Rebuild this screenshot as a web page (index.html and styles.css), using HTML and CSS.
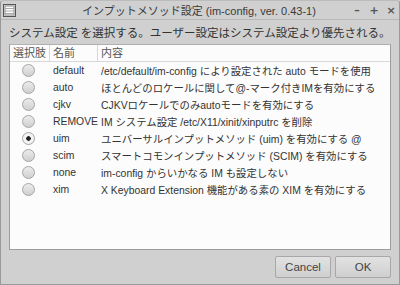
FILE: index.html
```html
<!DOCTYPE html>
<html lang="ja">
<head>
    <meta charset="UTF-8">
    <title>インプットメソッド設定</title>
    <link rel="stylesheet" href="styles.css">
</head>
<body>

<div class="window">

    <div class="titlebar">
        <svg class="app-icon" width="13" height="13" viewBox="0 0 13 13">
            <rect x="0.5" y="0.5" width="12" height="12" fill="#eee" stroke="#555"/>
            <rect x="2" y="2" width="9" height="9" fill="#fff" stroke="#888" stroke-width="1"/>
            <line x1="2" y1="4.5" x2="11" y2="4.5" stroke="#aaa"/>
            <line x1="2" y1="7" x2="11" y2="7" stroke="#aaa"/>
            <line x1="2" y1="9.5" x2="11" y2="9.5" stroke="#aaa"/>
        </svg>
        <div class="title">インプットメソッド設定 (im-config, ver. 0.43-1)</div>
        <div class="controls">
            <span class="ctl">&#8211;</span>
            <span class="ctl">+</span>
            <span class="ctl">&#215;</span>
        </div>
    </div>

    <div class="content">
        <p class="desc">システム設定 を選択する。ユーザー設定はシステム設定より優先される。</p>

        <div class="list">
            <div class="row head">
                <div class="c1">選択肢</div>
                <div class="c2">名前</div>
                <div class="c3">内容</div>
            </div>
            <div class="row">
                <div class="c1"><span class="radio"></span></div>
                <div class="c2">default</div>
                <div class="c3">/etc/default/im-config により設定された auto モードを使用</div>
            </div>
            <div class="row">
                <div class="c1"><span class="radio"></span></div>
                <div class="c2">auto</div>
                <div class="c3">ほとんどのロケールに関して@-マーク付きIMを有効にする</div>
            </div>
            <div class="row">
                <div class="c1"><span class="radio"></span></div>
                <div class="c2">cjkv</div>
                <div class="c3">CJKVロケールでのみautoモードを有効にする</div>
            </div>
            <div class="row">
                <div class="c1"><span class="radio"></span></div>
                <div class="c2">REMOVE</div>
                <div class="c3">IM システム設定 /etc/X11/xinit/xinputrc を削除</div>
            </div>
            <div class="row">
                <div class="c1"><span class="radio on"></span></div>
                <div class="c2">uim</div>
                <div class="c3">ユニバーサルインプットメソッド (uim) を有効にする @</div>
            </div>
            <div class="row">
                <div class="c1"><span class="radio"></span></div>
                <div class="c2">scim</div>
                <div class="c3">スマートコモンインプットメソッド (SCIM) を有効にする</div>
            </div>
            <div class="row">
                <div class="c1"><span class="radio"></span></div>
                <div class="c2">none</div>
                <div class="c3">im-config からいかなる IM も設定しない</div>
            </div>
            <div class="row">
                <div class="c1"><span class="radio"></span></div>
                <div class="c2">xim</div>
                <div class="c3">X Keyboard Extension 機能がある素の XIM を有効にする</div>
            </div>
        </div>

        <div class="buttons">
            <button class="btn">Cancel</button>
            <button class="btn">OK</button>
        </div>
    </div>

</div>

</body>
</html>
```

FILE: styles.css
```css
body {
    margin: 0;
    background: #d4d4d4;
    font-family: "Liberation Sans", "Noto Sans CJK JP", sans-serif;
    font-size: 11.5px;
    color: #333;
}

.window {
    width: 398px;
    height: 283px;
    background: #d0d0d0;
    border: 1px solid #9a9a9a;
    border-top-color: #bcbcbc;
    border-radius: 3px 3px 0 0;
    display: flex;
    flex-direction: column;
}

.titlebar {
    height: 18px;
    display: flex;
    align-items: center;
    padding: 0 3px 0 2px;
    border-bottom: 1px solid #b8b8b8;
}

.app-icon {
    flex: none;
    margin-top: 1px;
}

.title {
    flex: 1;
    text-align: center;
    font-size: 11px;
    color: #3a3a3a;
    padding-left: 30px;
}

.controls {
    display: flex;
    gap: 7px;
    font-weight: bold;
    color: #555;
    font-family: "DejaVu Sans", sans-serif;
    font-size: 11px;
}

.ctl {
    width: 10px;
    text-align: center;
}

.content {
    flex: 1;
    padding: 0 8px;
    display: flex;
    flex-direction: column;
}

.desc {
    margin: 6px 0 4px 0;
    line-height: 14px;
    white-space: nowrap;
    color: #333;
}

.list {
    height: 204px;
    background: #fcfcfc;
    border: 1px solid #9c9c9c;
    border-top-color: #b0b0b0;
    font-size: 10.4px;
}

.row {
    display: flex;
    height: 17px;
    align-items: center;
    white-space: nowrap;
}

.row.head {
    height: 16px;
    border-bottom: 1px solid #d8d8d8;
    color: #555;
    font-size: 11px;
}

.row .c1,
.row .c2 {
    border-right: 1px solid transparent;
}

.head .c1,
.head .c2 {
    border-right-color: #d8d8d8;
}

.head > div {
    height: 16px;
    line-height: 16px;
}

.c1 {
    width: 35px;
    flex: none;
    padding-left: 4px;
}

.head .c1 {
    width: 36px;
    padding-left: 3px;
}

.c2 {
    width: 44px;
    flex: none;
    padding-left: 3px;
}

.c3 {
    flex: 1;
    padding-left: 3px;
}

.radio {
    display: block;
    width: 11px;
    height: 11px;
    border: 1px solid #a5a5a5;
    border-radius: 50%;
    background: linear-gradient(#ececec, #cfcfcf);
    margin-left: 8px;
}

.radio.on {
    background: radial-gradient(circle, #222 0 2px, #f2f2f2 2.5px);
}

.buttons {
    display: flex;
    justify-content: flex-end;
    gap: 4px;
    margin-top: 6px;
}

.btn {
    width: 56px;
    height: 22px;
    font-family: "Liberation Sans", sans-serif;
    font-size: 11.5px;
    color: #444;
    background: linear-gradient(#e2e2e2, #cfcfcf);
    border: 1px solid #a8a8a8;
    border-radius: 2px;
}
```
